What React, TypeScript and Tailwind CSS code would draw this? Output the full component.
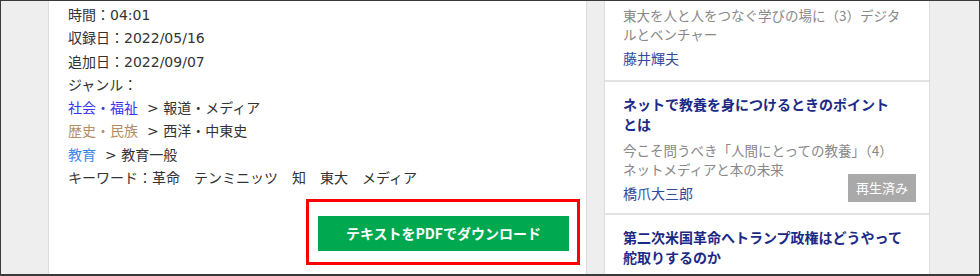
const related = [
  {
    title: null,
    sub: '東大を人と人をつなぐ学びの場に（3）デジタルとベンチャー',
    author: '藤井輝夫',
    played: false,
  },
  {
    title: 'ネットで教養を身につけるときのポイントとは',
    sub: '今こそ問うべき「人間にとっての教養」（4）ネットメディアと本の未来',
    author: '橋爪大三郎',
    played: true,
  },
  {
    title: '第二次米国革命へトランプ政権はどうやって舵取りするのか',
    sub: null,
    author: null,
    played: false,
  },
];

/* Left column: lecture metadata + PDF download */
function LectureMeta() {
  return (
    <div className="w-[539px] shrink-0 border-x border-[#dcdcdc] bg-white">
      <div className="pl-[19px] pt-[3px] text-[14px] leading-[23.3px] text-[#333] font-['DejaVu_Sans','Noto_Sans_CJK_JP',sans-serif]">
        <p>時間：04:01</p>
        <p>収録日：2022/05/16</p>
        <p>追加日：2022/09/07</p>
        <p>ジャンル：</p>
        <p>
          <a className="text-[#3535f2]">社会・福祉</a>
          <span className="ml-[9px]">&gt; 報道・メディア</span>
        </p>
        <p>
          <a className="text-[#b38e66]">歴史・民族</a>
          <span className="ml-[9px]">&gt; 西洋・中東史</span>
        </p>
        <p>
          <a className="text-[#3b86ea]">教育</a>
          <span className="ml-[9px]">&gt; 教育一般</span>
        </p>
        <p>キーワード：革命　テンミニッツ　知　東大　メディア</p>
      </div>

      <div className="mt-[9px] flex justify-end pr-[6px]">
        <div className="h-[66px] w-[274px] border-[3px] border-[#ff0000] pl-[9px] pt-[14px]">
          <button className="flex h-[35px] w-[251px] items-center justify-center bg-[#00a94f] text-[14px] font-bold text-white font-['Noto_Sans_CJK_JP',sans-serif]">
            テキストをPDFでダウンロード
          </button>
        </div>
      </div>
    </div>
  );
}

/* Right column: related lecture cards */
function RelatedList() {
  return (
    <div className="w-[326px] shrink-0 border-x border-[#dcdcdc] bg-white font-['Noto_Sans_CJK_JP',sans-serif]">
      <ul className="divide-y-2 divide-[#e2e2e2]">
        {related.map((r, i) => (
          <li
            key={i}
            className={
              i === 0
                ? 'relative pl-[18px] pt-[5px] pb-[12px]'
                : i === 1
                  ? 'relative pl-[18px] pt-[12px] pb-[10px]'
                  : 'relative pl-[18px] pt-[12px] pb-[10px]'
            }
          >
            {r.title && (
              <h3 className="w-[279.5px] text-[14px] font-bold leading-5 text-[#1b2a86]">
                {r.title}
              </h3>
            )}
            {r.sub && (
              <p
                className={
                  r.title
                    ? 'mt-[7px] w-[279.5px] text-[13.5px] leading-[19px] text-[#888]'
                    : 'w-[279.5px] text-[13.5px] leading-[19px] text-[#888]'
                }
              >
                {r.sub}
              </p>
            )}
            {r.author && (
              <p className="mt-[4px] text-[14px] leading-5 text-[#2f4b9b]">{r.author}</p>
            )}
            {r.played && (
              <span className="absolute bottom-[11px] right-[13px] flex h-[28px] w-[68px] items-center justify-center bg-[#a9a9a9] text-[13px] text-white">
                再生済み
              </span>
            )}
          </li>
        ))}
      </ul>
    </div>
  );
}

export default function App() {
  return (
    <div className="flex h-[276px] w-[980px] overflow-hidden border border-b-2 border-[#3a3a3a] bg-[#eeeeee]">
      <div className="w-[47px] shrink-0" />
      <LectureMeta />
      <div className="w-[17px] shrink-0" />
      <RelatedList />
      <div className="flex-1" />
    </div>
  );
}
